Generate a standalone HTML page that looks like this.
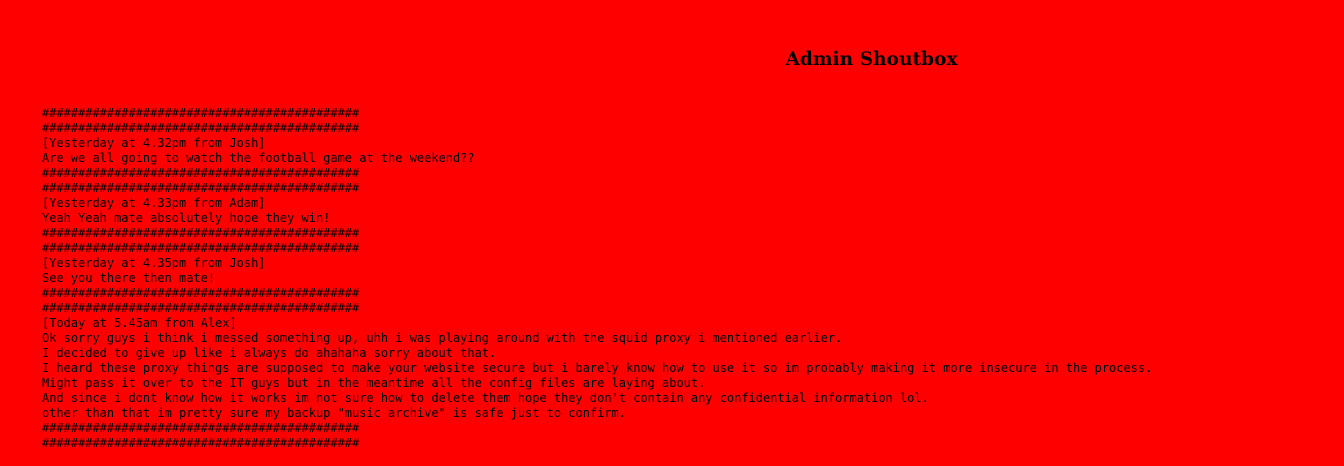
<!DOCTYPE html>
<html><head><meta charset="utf-8"><style>
html,body{margin:0;padding:0;background:#ff0000;width:1344px;height:466px;overflow:hidden}
h1{position:absolute;left:0;width:1743px;top:49px;margin:0;text-align:center;font:bold 18.6px "DejaVu Serif",serif;color:#000}
pre{position:absolute;left:42px;top:106px;margin:0;font:12px/15px "DejaVu Sans Mono",monospace;color:#000;letter-spacing:-0.015px}
</style></head><body>
<h1>Admin Shoutbox</h1>
<pre>############################################
############################################
[Yesterday at 4.32pm from Josh]
Are we all going to watch the football game at the weekend??
############################################
############################################
[Yesterday at 4.33pm from Adam]
Yeah Yeah mate absolutely hope they win!
############################################
############################################
[Yesterday at 4.35pm from Josh]
See you there then mate!
############################################
############################################
[Today at 5.45am from Alex]
Ok sorry guys i think i messed something up, uhh i was playing around with the squid proxy i mentioned earlier.
I decided to give up like i always do ahahaha sorry about that.
I heard these proxy things are supposed to make your website secure but i barely know how to use it so im probably making it more insecure in the process.
Might pass it over to the IT guys but in the meantime all the config files are laying about.
And since i dont know how it works im not sure how to delete them hope they don't contain any confidential information lol.
other than that im pretty sure my backup "music archive" is safe just to confirm.
############################################
############################################</pre>
</body></html>
